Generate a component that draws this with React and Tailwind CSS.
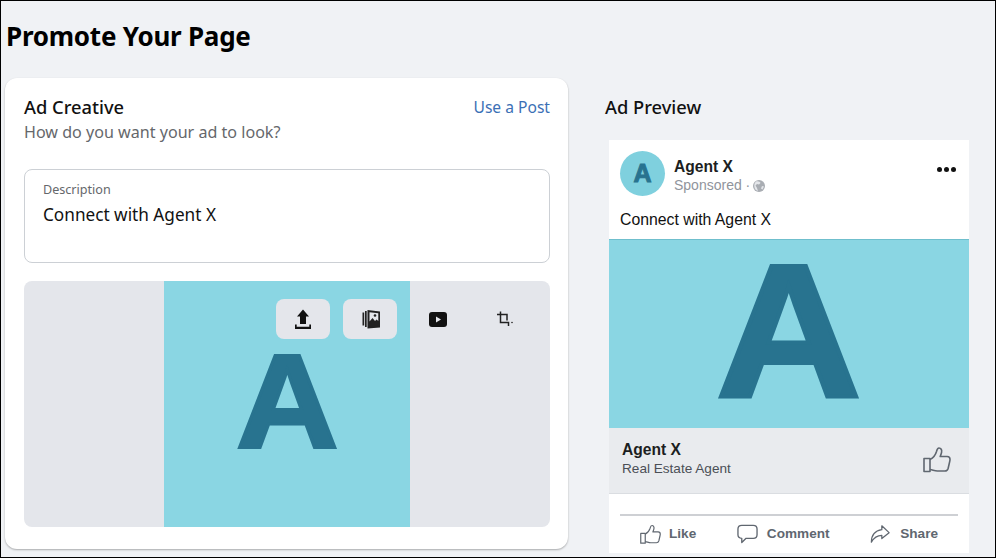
import React from 'react';

const segoe = { fontFamily: '"Noto Sans", sans-serif' };

function ThumbIcon({ className }) {
  return (
    <svg viewBox="0 0 28 26" fill="none" stroke="currentColor" strokeWidth="1.6" strokeLinejoin="round" className={className}>
      <path d="M1 11.500h6v13H1z" />
      <path d="M7 12.500c3-1.500 5.500-4.500 6.500-8 .4-1.600 1-3.500 2.500-3.500 2 0 3 2 2.600 4.200-.2 1.400-.8 2.800-1.400 4.300h7c1.800 0 2.800 1.200 2.800 2.800 0 .9-.1 1.700-.4 2.700l-1.500 6.500c-.5 1.800-1.500 2.500-3.200 2.500h-7.500c-2.500 0-4-.8-7.400-1.500" />
    </svg>
  );
}

function CommentIcon({ className }) {
  return (
    <svg viewBox="0 0 22 20" fill="none" stroke="currentColor" strokeWidth="1.4" strokeLinejoin="round" className={className}>
      <path d="M5 1h12c2.400 0 4 1.500 4 3.800v6c0 2.400-1.600 3.700-4 3.700h-7.500L5 19v-4.500c-2.400-.1-4-1.400-4-3.700v-6C1 2.500 2.600 1 5 1z" />
    </svg>
  );
}

function ShareIcon({ className }) {
  return (
    <svg viewBox="0 0 22 20" fill="none" stroke="currentColor" strokeWidth="1.4" strokeLinejoin="round" className={className}>
      <path d="M13 1l8 7.500-8 6.500v-3.600c-5 0-8.500 2-11.500 7.600C1.500 12 5 6.500 13 5.200z" />
    </svg>
  );
}

function BigLetter({ className }) {
  return (
    <span className={`block font-bold text-[#28738f] ${className}`} style={{ fontFamily: '"Liberation Sans", sans-serif' }}>
      A
    </span>
  );
}

function ToolButton({ active, children }) {
  return (
    <div className={`w-[54px] h-10 rounded-lg flex items-center justify-center ${active ? 'bg-[#e4e6eb]' : ''}`}>
      {children}
    </div>
  );
}

function AdCreative() {
  return (
    <div className="w-[563px] h-[471px] bg-white rounded-xl shadow-[0_1px_2px_rgba(0,0,0,0.3)] pt-[18px] pl-[19px] pr-[18px] shrink-0">
      <div className="flex justify-between items-start">
        <div>
          <h2 className="text-[18.3px] leading-[22px] font-medium text-[#111]">Ad Creative</h2>
          <p className="text-[16.1px] leading-[22px] mt-[3px] text-[#65676b]">How do you want your ad to look?</p>
        </div>
        <a className="text-[15.6px] leading-[22px] text-[#3b70b5]">Use a Post</a>
      </div>

      <div className="mt-[26px] h-[94px] border border-[#ccd0d5] rounded-lg px-[18px] pt-[11px]">
        <div className="text-[12.6px] leading-[17px] text-[#65676b]">Description</div>
        <div className="text-[17.2px] leading-[22px] mt-[6px] text-[#111]">Connect with Agent X</div>
      </div>

      <div className="mt-[18px] h-[246px] bg-[#e4e6eb] rounded-lg overflow-hidden flex justify-center">
        <div className="w-[246px] shrink-0 bg-[#8ad6e3] flex items-end justify-center relative">
          <BigLetter className="text-[134px] leading-[110px] mb-[70px] scale-x-[1.06] [-webkit-text-stroke:3px_#28738f]" />
          <div className="absolute top-[18px] left-[112px] flex gap-[13px]">
            <ToolButton active>
              <svg viewBox="0 0 18 20" className="w-[18px] h-[20px] fill-[#111]">
                <path d="M9 0.500l6 7h-3v7.500H6V7.500H3z" />
                <path d="M1 15.500h1.700v2.300h12.600v-2.300H17V20H1z" />
              </svg>
            </ToolButton>
            <ToolButton active>
              <svg viewBox="0 0 18 20" className="w-[18px] h-[20px] ml-[1px]">
                <path d="M0.500 3.500h1.700v13H0.500zM3 2h1.700v16H3z" fill="#222" />
                <path fillRule="evenodd" d="M5.500 1L18 2.500v16L5.500 19.500zM7.500 3.200v9.300l3-3.500 2.500 3 1.500-1.500 1.800 1.500V4.300z" fill="#222" />
                <circle cx="13" cy="6.500" r="1.300" fill="#222" />
              </svg>
            </ToolButton>
            <ToolButton>
              <svg viewBox="0 0 18 15" className="w-[18px] h-[15px] ml-[2px]">
                <rect width="18" height="15" rx="3" fill="#111" />
                <path d="M7 4.500l5 3-5 3z" fill="#e4e6eb" />
              </svg>
            </ToolButton>
            <ToolButton>
              <svg viewBox="0 0 17 18" fill="none" stroke="#222" strokeWidth="1.5" className="w-[17px] h-[18px] ml-[1px]">
                <path d="M4.500 1.500v11h8V16" />
                <path d="M1 4.500h10v6" />
                <circle cx="16" cy="12.500" r="0.800" fill="#222" stroke="none" />
              </svg>
            </ToolButton>
          </div>
        </div>
      </div>
    </div>
  );
}

function AdPreview() {
  return (
    <div className="ml-[37px] w-[365px] shrink-0">
      <h2 className="text-[18.3px] leading-[22px] font-medium text-[#111] mt-[18px]">Ad Preview</h2>
      <div className="mt-[22px] ml-[4px] w-[360px] h-[413px] bg-white flex flex-col" style={{ fontFamily: '"Liberation Sans", sans-serif' }}>
        <div className="flex items-start px-[11px] pt-[11px] h-[64px]">
          <div className="w-[45px] h-[45px] rounded-full bg-[#7fd0de] flex items-center justify-center shrink-0">
            <BigLetter className="text-[25px] leading-[25px] [-webkit-text-stroke:1px_#28738f]" />
          </div>
          <div className="ml-[9px] mt-[6px]">
            <div className="text-[15.6px] leading-[20px] font-bold text-[#1c1e21]">Agent X</div>
            <div className="flex items-center text-[14px] leading-[17px] text-[#90949c]">
              Sponsored ·
              <svg viewBox="0 0 12 12" className="ml-[3px] w-[12px] h-[12px]">
                <circle cx="6" cy="6" r="6" fill="#a9adb3" />
                <path d="M3 1.500c2-.8 4 0 4.500 1.500L6 4.500 4 4 2.500 5.500 4 8l1 3-2-1C1 8 .5 4 3 1.500zM9 6l2 .5-1.500 3L8 8.500z" fill="#e4e6ea" />
              </svg>
            </div>
          </div>
          <div className="ml-auto mt-[16px] mr-[2px] flex gap-[2px]">
            <span className="w-[5px] h-[5px] rounded-full bg-[#111]" />
            <span className="w-[5px] h-[5px] rounded-full bg-[#111]" />
            <span className="w-[5px] h-[5px] rounded-full bg-[#111]" />
          </div>
        </div>
        <div className="px-[11px] text-[15.8px] leading-[20px] text-[#111] mt-[6px]">Connect with Agent X</div>
        <div className="mt-[9px] h-[189px] bg-[#8ad6e3] border-t border-[#6fbfcd] flex items-start justify-center pt-[15px]">
          <BigLetter className="text-[190px] leading-[150px] scale-x-[1.06] [-webkit-text-stroke:4px_#28738f]" />
        </div>
        <div className="h-[66px] bg-[#e9ebee] border-b border-[#dadde1] flex items-center justify-between pl-[13px] pr-[18px]">
          <div className="-mt-[3px]">
            <div className="text-[15.6px] leading-[20px] font-bold text-[#1c1e21]">Agent X</div>
            <div className="text-[13.6px] leading-[18px] text-[#4b4f56]">Real Estate Agent</div>
          </div>
          <ThumbIcon className="w-[28px] h-[26px] text-[#606770] -mt-[2px]" />
        </div>
        <div className="mx-[11px] mt-[20px] border-t-2 border-[#ced0d4] flex justify-between text-[13.6px] font-bold text-[#606770] pl-[20px] pr-[20px] pt-[8px]">
          <div className="flex items-start gap-[8px]">
            <ThumbIcon className="w-[21px] h-[21px]" />
            <span className="leading-[20px]">Like</span>
          </div>
          <div className="flex items-start gap-[9px]">
            <CommentIcon className="w-[21px] h-[20px]" />
            <span className="leading-[20px]">Comment</span>
          </div>
          <div className="flex items-start gap-[10px]">
            <ShareIcon className="w-[20px] h-[20px]" />
            <span className="leading-[20px]">Share</span>
          </div>
        </div>
      </div>
    </div>
  );
}

export default function App() {
  return (
    <div className="w-[996px] h-[559px] bg-white overflow-hidden" style={segoe}>
      <div className="h-[558px] bg-[#f0f2f5] border border-black pl-[4px]">
        <h1 className="text-[26px] leading-[34px] font-bold tracking-[-0.25px] text-black pt-[18px] pl-[1px] h-[77px] box-border">Promote Your Page</h1>
        <div className="flex items-start">
          <AdCreative />
          <AdPreview />
        </div>
      </div>
    </div>
  );
}
